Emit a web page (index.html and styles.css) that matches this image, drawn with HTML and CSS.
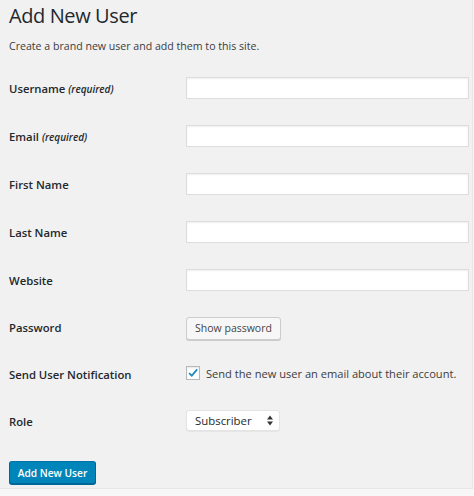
FILE: index.html
```html
<!DOCTYPE html>
<html lang="en">
<head>
    <meta charset="UTF-8">
    <meta name="viewport" content="width=device-width, initial-scale=1.0">
    <link rel="stylesheet" href="styles.css">
    <title>Add New User</title>
</head>
<body>
    <div class="wrap">
        <h1>Add New User</h1>
        <p class="intro">Create a brand new user and add them to this site.</p>

        <form class="user-form">
            <div class="row">
                <label>Username <span class="req">(required)</span></label>
                <input type="text" class="field">
            </div>
            <div class="row">
                <label>Email <span class="req">(required)</span></label>
                <input type="text" class="field">
            </div>
            <div class="row">
                <label>First Name</label>
                <input type="text" class="field">
            </div>
            <div class="row">
                <label>Last Name</label>
                <input type="text" class="field">
            </div>
            <div class="row">
                <label>Website</label>
                <input type="text" class="field">
            </div>
            <div class="row short">
                <label>Password</label>
                <div><button type="button" class="button">Show password</button></div>
            </div>
            <div class="row short">
                <label>Send User Notification</label>
                <div class="check-line">
                    <span class="checkbox">
                        <svg width="14" height="14" viewBox="0 0 14 14">
                            <path d="M2.5 7.2 L5.6 10.2 L11.8 2.8" fill="none" stroke="#1e8cbe" stroke-width="2.2"/>
                        </svg>
                    </span>
                    Send the new user an email about their account.
                </div>
            </div>
            <div class="row short">
                <label>Role</label>
                <div>
                    <div class="select">
                        Subscriber
                        <svg class="arrows" width="6" height="11" viewBox="0 0 6 11">
                            <path d="M0 4.5 L3 0.5 L6 4.5 Z M0 6.5 L3 10.5 L6 6.5 Z" fill="#333"/>
                        </svg>
                    </div>
                </div>
            </div>

            <button type="button" class="button primary">Add New User</button>
        </form>
    </div>
</body>
</html>
```

FILE: styles.css
```css
body {
    margin: 0;
    padding: 0;
    background-color: #f7f7f7;
    font-family: 'Open Sans', 'Liberation Sans', sans-serif;
    color: #23282d;
}

.wrap {
    width: 463px;
    height: 488px;
    padding-left: 9px;
    background-color: #f1f1f1;
    border-right: 1px solid #e6e6e6;
    border-bottom: 1px solid #e6e6e6;
}

h1 {
    margin: 0;
    font-size: 20px;
    font-weight: 400;
    letter-spacing: -0.4px;
    line-height: 31px;
    color: #23282d;
}

.intro {
    margin: 5px 0 8px;
    font-size: 10.6px;
    line-height: 20px;
    color: #3c3c3c;
}

.row {
    display: grid;
    grid-template-columns: 177px 1fr;
    align-items: center;
    height: 48px;
}

.row.short {
    height: 47px;
}

label {
    font-size: 11.3px;
    font-weight: 600;
    color: #23282d;
}

.req {
    font-size: 10px;
    font-style: italic;
    font-weight: 600;
}

.field {
    box-sizing: border-box;
    width: 283px;
    height: 22px;
    margin: 0;
    border: 1px solid #ddd;
    background-color: #fff;
    box-shadow: inset 0 1px 2px rgba(0, 0, 0, 0.07);
}

.button {
    box-sizing: border-box;
    width: 95px;
    height: 23px;
    padding: 0;
    border: 1px solid #ccc;
    border-radius: 3px;
    background-color: #f7f7f7;
    box-shadow: 0 1px 0 #ccc;
    font-family: 'Open Sans', 'Liberation Sans', sans-serif;
    font-size: 10.5px;
    color: #444;
    margin-top: -3px;
}

.button.primary {
    width: 87px;
    margin-top: 16px;
    background-color: #0085ba;
    border-color: #0073aa #006799 #006799;
    box-shadow: 0 1px 0 #006799;
    color: #fff;
    font-weight: 600;
    font-size: 10.2px;
}

.check-line {
    display: flex;
    align-items: center;
    gap: 6px;
    font-size: 11.1px;
    color: #3c3c3c;
    margin-top: -3px;
}

.checkbox {
    box-sizing: border-box;
    width: 14px;
    height: 14px;
    border: 1px solid #b4b9be;
    background-color: #fff;
    box-shadow: inset 0 1px 2px rgba(0, 0, 0, 0.1);
    display: flex;
    align-items: center;
    justify-content: center;
}

.checkbox svg {
    margin-top: -1px;
}

.select {
    box-sizing: border-box;
    width: 94px;
    height: 21px;
    padding: 0 6px 0 8px;
    display: flex;
    align-items: center;
    justify-content: space-between;
    background-color: #fff;
    border: 1px solid #e4e4e4;
    border-radius: 3px;
    box-shadow: 0 1px 1px rgba(0, 0, 0, 0.05);
    font-size: 11.4px;
    color: #23282d;
    margin-top: -3px;
}
```
